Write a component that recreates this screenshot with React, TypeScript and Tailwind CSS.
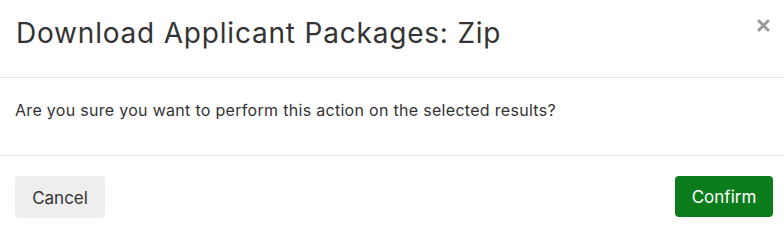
export default function App() {
  return (
    <div className="w-[784px] h-[234px] bg-white text-[#333] flex flex-col" style={{ fontFamily: 'Inter, "Liberation Sans", Arial, sans-serif' }}>
      <div className="h-[78px] border-b border-[#e5e5e5] flex items-start justify-between pl-[16px] pr-[14px]">
        <h1 className="text-[28px] leading-[34px] mt-[16px] font-normal tracking-[0.8px] text-[#333]">Download Applicant Packages: Zip</h1>
        <button className="mt-[18px] w-[14px] h-[14px] flex items-center justify-center">
          <svg width="13" height="13" viewBox="0 0 13 13">
            <path d="M2 2 L11 11 M11 2 L2 11" stroke="#999" strokeWidth="3" strokeLinecap="round" />
          </svg>
        </button>
      </div>
      <div className="h-[78px] border-b border-[#e5e5e5] flex items-center px-[15px]">
        <p className="text-[16px] leading-[22px] text-[#333] tracking-[0.3px] -mt-[14px]">Are you sure you want to perform this action on the selected results?</p>
      </div>
      <div className="flex-1 flex items-start justify-between px-[15px] pt-[20px]">
        <button className="w-[90px] h-[42px] pt-[3px] rounded-[4px] bg-[#eeeeee] text-[#333] text-[17px]">Cancel</button>
        <button className="w-[98px] h-[41px] pt-[3px] rounded-[4px] bg-[#0a7c1c] text-white text-[17px] mr-[-4px]">Confirm</button>
      </div>
    </div>
  );
}
